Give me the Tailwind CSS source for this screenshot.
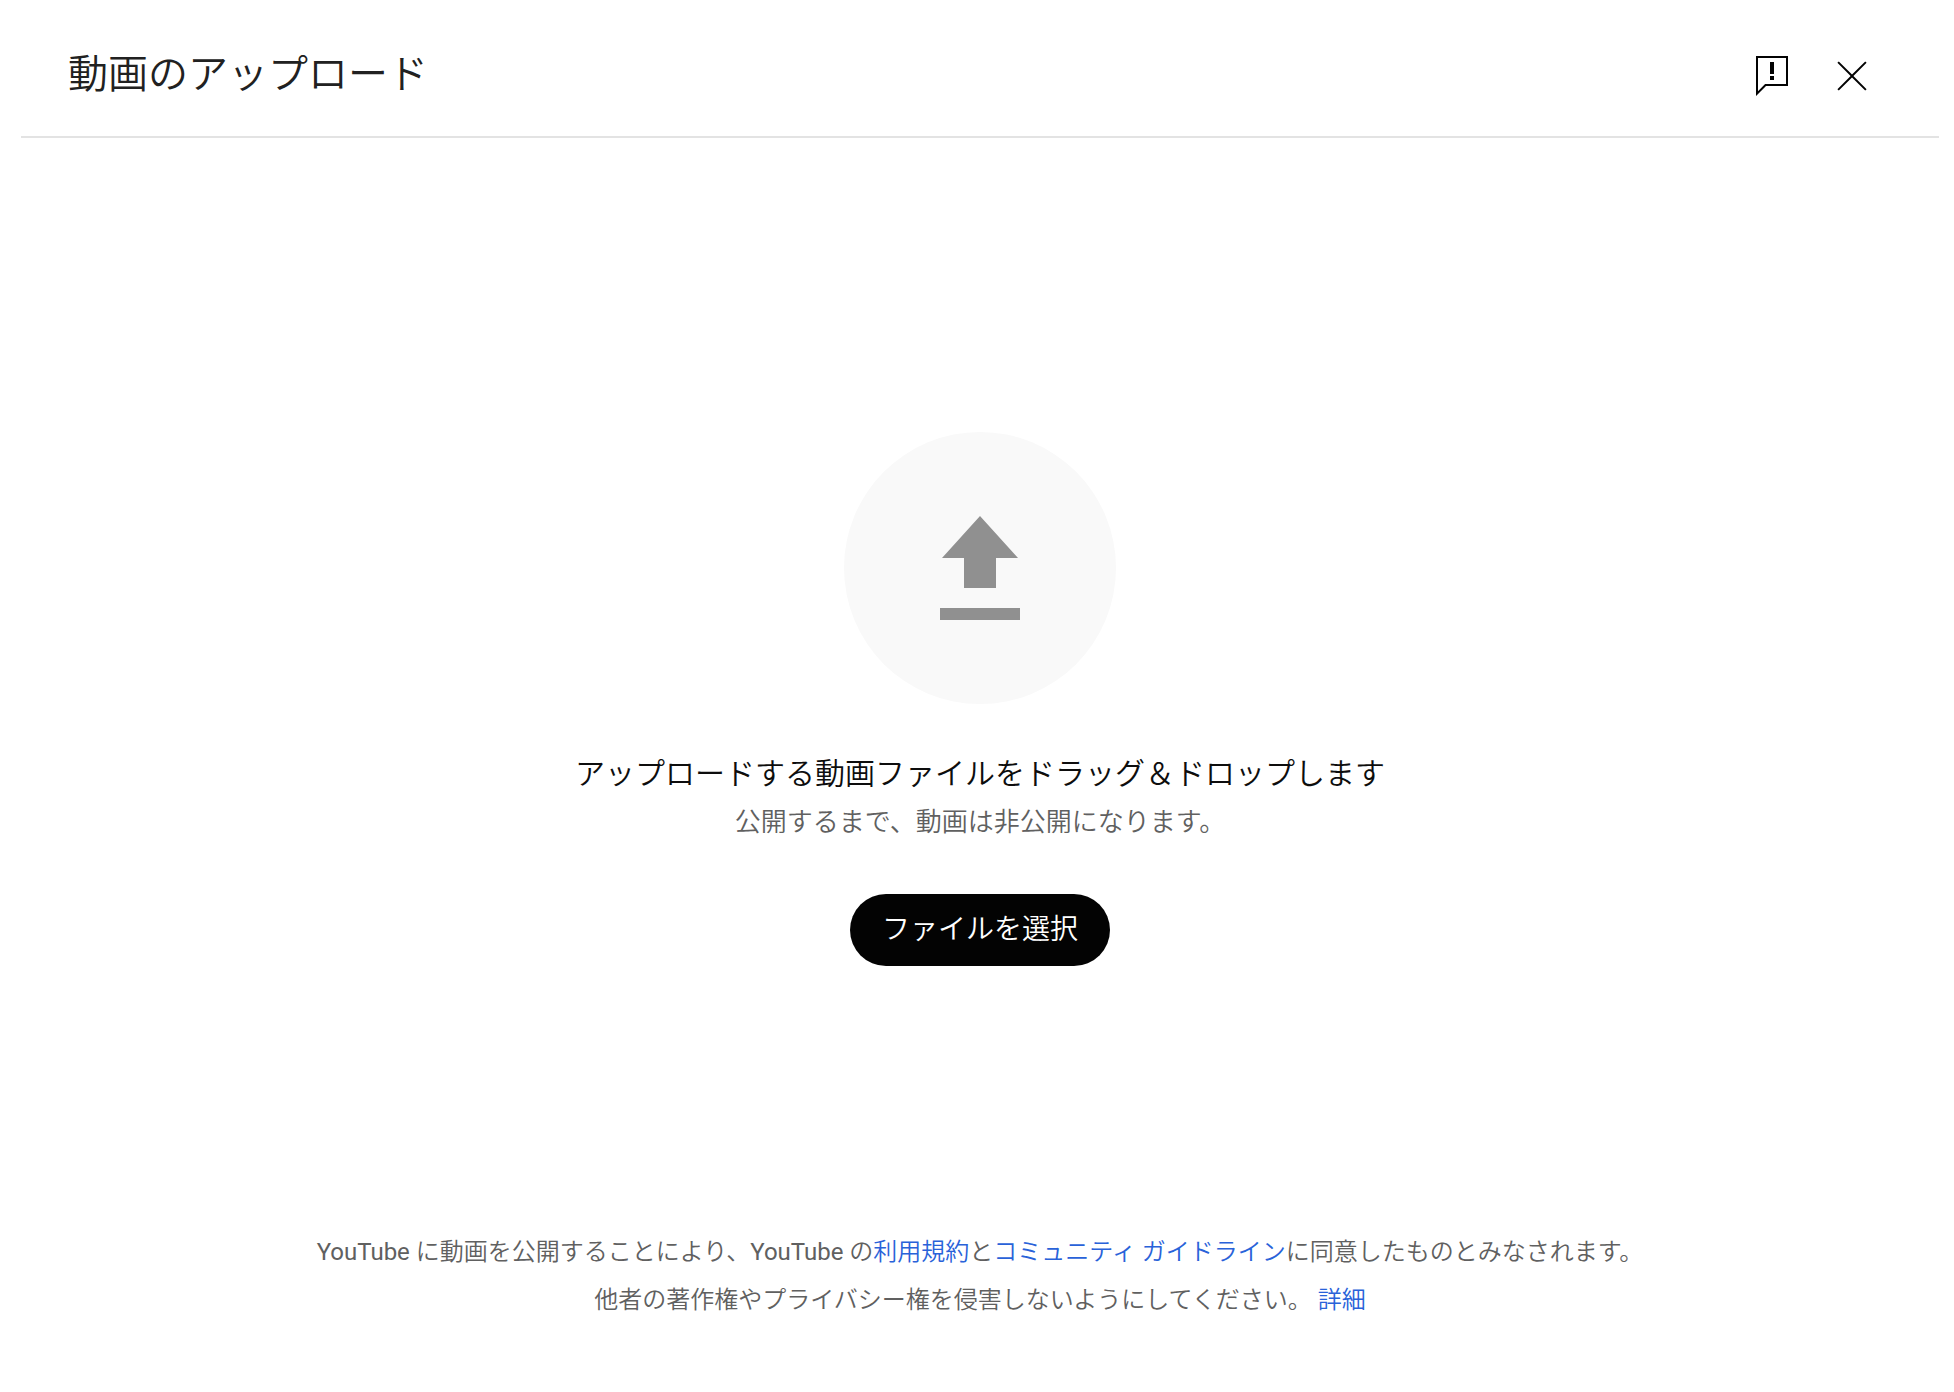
<!DOCTYPE html>
<html lang="ja">
<head>
    <meta charset="UTF-8">
    <meta name="viewport" content="width=device-width, initial-scale=1.0">
    <script src="https://cdn.jsdelivr.net/npm/@tailwindcss/browser@4"></script>
    <title>動画のアップロード</title>
</head>
<body class="bg-white font-[Roboto,'Noto_Sans_CJK_JP',sans-serif]">

    <div class="flex flex-col min-h-screen pl-[21px] pr-[15px]">
        <header class="flex items-center justify-between h-[138px] pl-[47px] pr-[63px] pt-4 border-b-2 border-[#e3e3e3]">
            <h1 class="text-[40px] leading-[48px] font-[350] text-[#212121] pb-0.5">動画のアップロード</h1>
            <div class="flex items-center gap-8">
                <button type="button" class="size-12 cursor-pointer" aria-label="フィードバックを送信">
                    <svg class="size-12" viewBox="0 0 24 24" fill="#030303"><path d="M13 14h-2v-2h2v2zm0-9h-2v6h2V5zm6-2H5v16.590l3.290-3.290.3-.3H19V3m1-1v15H9l-5 5V2h16z"/></svg>
                </button>
                <button type="button" class="size-12 cursor-pointer" aria-label="閉じる">
                    <svg class="size-12" viewBox="0 0 24 24" fill="#030303"><path d="M12.700 12l6.600 6.600-.7.7-6.600-6.600-6.600 6.600-.7-.7 6.600-6.600-6.600-6.600.7-.7 6.600 6.600 6.600-6.600.7.7z"/></svg>
                </button>
            </div>
        </header>

        <main class="flex flex-col items-center grow pt-[294px] text-center font-[350]">
            <div class="flex items-center justify-center size-[272px] rounded-full bg-[#f9f9f9]">
                <svg class="w-20 h-[104px]" viewBox="0 0 80 104" fill="#909090"><path d="M40 0L78 42H56V72H24V42H2zM0 92H80V104H0z"/></svg>
            </div>
            <p class="mt-12 text-[30px] leading-[44px] text-[#0d0d0d]">アップロードする動画ファイルをドラッグ＆ドロップします</p>
            <p class="mt-1 text-[26px] leading-[44px] text-[#606060]">公開するまで、動画は非公開になります。</p>
            <button type="button" class="mt-[50px] h-[72px] px-8 rounded-full bg-[#030303] text-white text-[28px] cursor-pointer">ファイルを選択</button>
        </main>

        <footer class="pb-[68px] text-center text-2xl leading-[48px] font-[350] text-[#606060]">
            <p><span class="font-normal">YouTube</span> に動画を公開することにより、<span class="font-normal">YouTube</span> の<a href="#" class="text-[#2962d9]">利用規約</a>と<a href="#" class="text-[#2962d9]">コミュニティ ガイドライン</a>に同意したものとみなされます。</p>
            <p>他者の著作権やプライバシー権を侵害しないようにしてください。 <a href="#" class="text-[#2962d9]">詳細</a></p>
        </footer>
    </div>

</body>
</html>
